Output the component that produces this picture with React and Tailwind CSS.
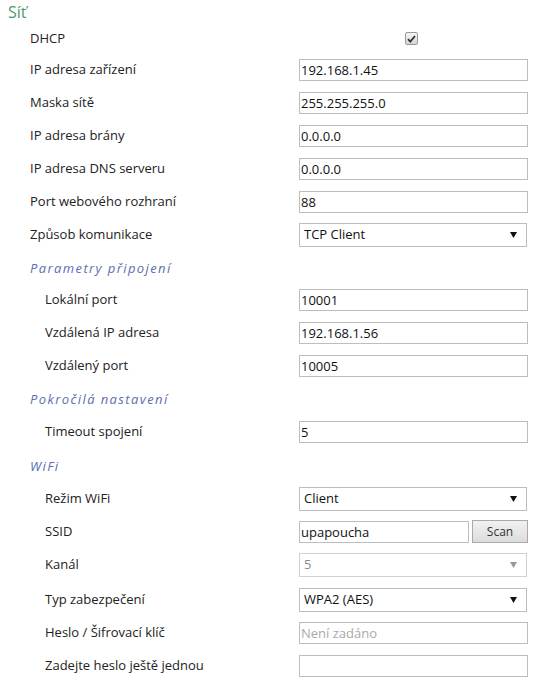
const font = { fontFamily: '"Open Sans", "Noto Sans", sans-serif' };

function Label({ children, sub }) {
  return (
    <div className={`w-[299px] shrink-0 text-[13px] text-[#222] ${sub ? 'pl-[45px]' : 'pl-[30px]'}`}>
      {children}
    </div>
  );
}

function TextRow({ label, value, placeholder, sub }) {
  return (
    <div className="flex h-[33px] items-center">
      <Label sub={sub}>{label}</Label>
      <input
        readOnly
        value={value || ''}
        placeholder={placeholder}
        className="h-[22px] w-[229px] border border-[#bdbdbd] bg-white px-px text-[13px] text-[#111] outline-none placeholder:text-[#aaa]"
      />
    </div>
  );
}

function SelectRow({ label, value, sub, disabled }) {
  return (
    <div className="flex h-[33px] items-center">
      <Label sub={sub}>{label}</Label>
      <div
        className={`flex h-[24px] w-[228px] items-center justify-between border bg-white pl-[4px] pr-[9px] text-[13px] ${
          disabled ? 'border-[#d0d0d0] text-[#8a8a8a]' : 'border-[#bdbdbd] text-[#111]'
        }`}
      >
        <span>{value}</span>
        <svg width="7" height="6" viewBox="0 0 7 6">
          <path d="M0 0h7L3.5 6z" fill={disabled ? '#999' : '#111'} />
        </svg>
      </div>
    </div>
  );
}

function Section({ title, pb }) {
  return (
    <div className={`flex items-end pl-[30px] ${pb}`}>
      <span className="text-[13px] italic tracking-[1.4px] text-[#5d6db0]">{title}</span>
    </div>
  );
}

export default function App() {
  return (
    <div className="h-[686px] w-[540px] overflow-hidden bg-white" style={font}>
      {/* Síť */}
      <div className="flex h-[24px] items-center pl-[8px] text-[16px] text-[#4f9a66]">Síť</div>

      <div className="flex h-[29px] items-center">
        <Label>DHCP</Label>
        <span className="ml-[106px] flex h-[13px] w-[13px] items-center justify-center rounded-[2px] border border-[#9a9a9a] bg-gradient-to-b from-[#f4f4f4] to-[#d6d6d6]">
          <svg width="9" height="8" viewBox="0 0 9 8">
            <path d="M1 4.2l2.3 2.4L8 1" stroke="#333" strokeWidth="1.8" fill="none" />
          </svg>
        </span>
      </div>

      <TextRow label="IP adresa zařízení" value="192.168.1.45" />
      <TextRow label="Maska sítě" value="255.255.255.0" />
      <TextRow label="IP adresa brány" value="0.0.0.0" />
      <TextRow label="IP adresa DNS serveru" value="0.0.0.0" />
      <TextRow label="Port webového rozhraní" value="88" />
      <SelectRow label="Způsob komunikace" value="TCP Client" />

      <Section title="Parametry připojení" pb="h-[32px] pb-[5px]" />
      <TextRow sub label="Lokální port" value="10001" />
      <TextRow sub label="Vzdálená IP adresa" value="192.168.1.56" />
      <TextRow sub label="Vzdálený port" value="10005" />

      <Section title="Pokročilá nastavení" pb="h-[33px] pb-[6px]" />
      <TextRow sub label="Timeout spojení" value="5" />

      <Section title="WiFi" pb="h-[34px] pb-[6px]" />
      <SelectRow sub label="Režim WiFi" value="Client" />
      <div className="flex h-[33px] items-center">
        <Label sub>SSID</Label>
        <input
          readOnly
          value="upapoucha"
          className="h-[22px] w-[170px] border border-[#bdbdbd] bg-white px-px text-[13px] text-[#111] outline-none"
        />
        <button className="ml-[3px] h-[23px] w-[56px] border border-[#aaa] bg-gradient-to-b from-[#f2f2f2] to-[#dcdcdc] text-[12px] text-[#333]">
          Scan
        </button>
      </div>
      <SelectRow sub disabled label="Kanál" value="5" />
      <div className="h-[2px]" />
      <SelectRow sub label="Typ zabezpečení" value="WPA2 (AES)" />
      <TextRow sub label="Heslo / Šifrovací klíč" placeholder="Není zadáno" />
      <TextRow sub label="Zadejte heslo ještě jednou" />
    </div>
  );
}
